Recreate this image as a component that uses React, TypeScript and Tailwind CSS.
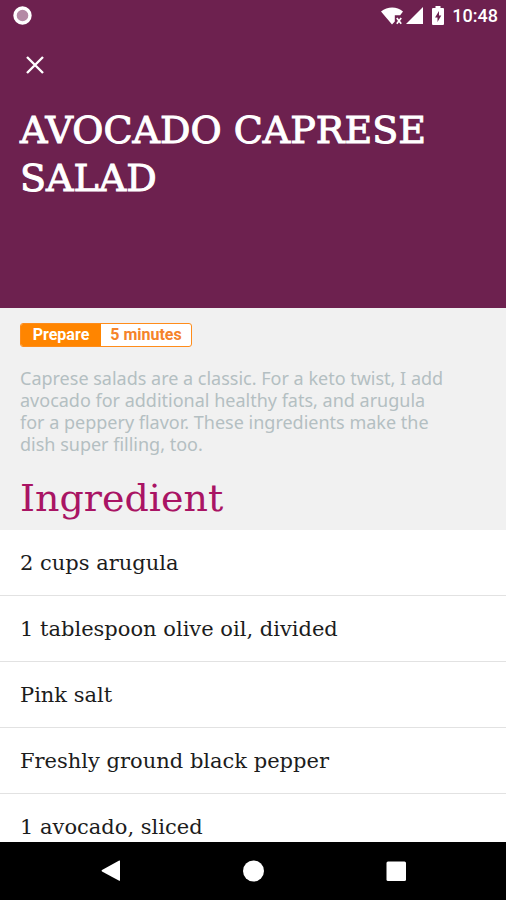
const ingredients = [
  "2 cups arugula",
  "1 tablespoon olive oil, divided",
  "Pink salt",
  "Freshly ground black pepper",
  "1 avocado, sliced",
];

const slab = "font-['DejaVu_Serif',serif]";

function StatusBar() {
  return (
    <div className="flex h-8 items-center justify-between pr-2 pl-3 text-white">
      <svg className="size-5" viewBox="0 0 20 20" aria-hidden="true">
        <circle cx="10.5" cy="9.5" r="7.5" fill="#b48aa5" stroke="#fff" strokeWidth="3.4" />
      </svg>
      <div className="flex items-center">
        <svg className="h-5 w-11" viewBox="0 0 44 20" aria-hidden="true">
          <path
            fill="#fff"
            d="M1 5.6C7.5.2 17 .2 23 5.6L20.2 9.2h-5.4v6.2L12 18.6z"
          />
          <path d="M16.8 12l4.4 5.8M21.2 12l-4.4 5.8" stroke="#fff" strokeWidth="1.7" />
          <path fill="#fff" d="M43 1V18H26z" />
        </svg>
        <svg className="ml-2 h-5 w-3" viewBox="0 0 12 20" aria-hidden="true">
          <path fill="#fff" d="M3.5 0h5v2H11a1 1 0 0 1 1 1v15a1 1 0 0 1-1 1H1a1 1 0 0 1-1-1V3a1 1 0 0 1 1-1h2.5z" />
          <path fill="#6d214f" d="M7 5L3 11.5h2.5V16l3.8-6.5H7z" />
        </svg>
        <span className="ml-2 text-lg font-medium">10:48</span>
      </div>
    </div>
  );
}

function Header() {
  return (
    <header className="h-[308px] shrink-0 bg-[#6d214f]">
      <StatusBar />
      <div className="flex h-16 items-center px-5">
        <button type="button" aria-label="Close" className="flex size-7 items-center justify-center">
          <svg className="size-5" viewBox="0 0 20 20" aria-hidden="true">
            <path d="M3 3l16 16M19 3L3 19" stroke="#fff" strokeWidth="2.4" />
          </svg>
        </button>
      </div>
      <h1 className={`${slab} px-5 pt-2.5 text-[38px] leading-12 text-white [-webkit-text-stroke:1px]`}>
        AVOCADO CAPRESE SALAD
      </h1>
    </header>
  );
}

function NavigationBar() {
  return (
    <nav className="flex h-[58px] shrink-0 items-center justify-center gap-[118px] bg-black">
      <button type="button" aria-label="Back" className="size-6">
        <svg viewBox="0 0 24 24" aria-hidden="true">
          <path d="M21 2v19.5q0 .5-.8.2L3 12.5q-1-.7 0-1.4L20.2 1.5q.8-.3.8.5z" fill="#fff" />
        </svg>
      </button>
      <button type="button" aria-label="Home" className="size-6">
        <svg viewBox="0 0 24 24" aria-hidden="true">
          <circle cx="12.5" cy="12" r="10.5" fill="#fff" />
        </svg>
      </button>
      <button type="button" aria-label="Recent apps" className="size-6">
        <svg viewBox="0 0 24 24" aria-hidden="true">
          <rect x="3.5" y="2.5" width="19.5" height="19.5" rx="1.5" fill="#fff" />
        </svg>
      </button>
    </nav>
  );
}

export default function App() {
  return (
    <div className="flex h-screen flex-col bg-white font-[Roboto,sans-serif]">
      <Header />
      <main className="min-h-0 flex-1 overflow-y-auto [scrollbar-width:none]">
        <section className="bg-[#f1f1f1] px-5 pt-[15px]">
          <div className="flex h-6 w-[172px] items-stretch overflow-hidden rounded-[3px] border border-[#ff8c1a] bg-white text-base font-bold">
            <span className="flex w-20 items-center justify-center bg-[#ff8500] text-white">Prepare</span>
            <span className="flex flex-1 items-center justify-center text-[#f5832a]">5 minutes</span>
          </div>
          <p className="pt-5 pr-9 font-['Noto_Sans',sans-serif] text-lg leading-[22px] text-[#b4bfc2]">
            Caprese salads are a classic. For a keto twist, I add avocado for additional healthy fats, and arugula for a
            peppery flavor. These ingredients make the dish super filling, too.
          </p>
          <h2 className={`${slab} pt-[19px] pb-2 text-[38px] leading-12 text-[#a91464]`}>Ingredient</h2>
        </section>
        <ul>
          {ingredients.map((item) => (
            <li
              key={item}
              className={`${slab} flex h-[66px] items-center border-b border-[#e2e2e2] px-5 pt-0.5 text-[21px] text-[#1c1c1c]`}
            >
              {item}
            </li>
          ))}
        </ul>
      </main>
      <NavigationBar />
    </div>
  );
}
